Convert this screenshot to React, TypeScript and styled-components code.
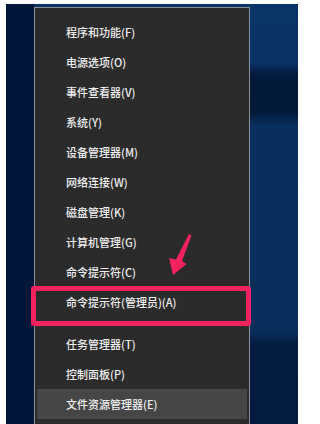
import React from 'react';
import styled, { createGlobalStyle } from 'styled-components';

const GlobalStyle = createGlobalStyle`
  html, body {
    margin: 0;
    padding: 0;
    background: #ffffff;
  }
  * {
    box-sizing: border-box;
  }
`;

const Frame = styled.div`
  width: 304px;
  height: 424px;
  padding: 4px 6px 0 6px;
  overflow: hidden;
`;

const Desktop = styled.div`
  height: 420px;
  padding: 3px 0 0 28px;
  background:
    linear-gradient(to right, #03163a 0, #03173b 28px, transparent 28px),
    linear-gradient(
      to bottom,
      #0b3468 0%,
      #0a3163 14%,
      #03193a 17%,
      #031a3b 26%,
      #0a2f5e 29%,
      #0a2d5b 78%,
      #051c40 81%,
      #041a3c 100%
    );
`;

const Menu = styled.div`
  position: relative;
  width: 216px;
  height: 420px;
  padding-top: 9px;
  background: #2b2b2b;
  border: 1px solid #8a9299;
  border-bottom: none;
  font-family: 'Noto Sans CJK SC', 'Noto Sans', sans-serif;
`;

const Item = styled.div<{ $marked?: boolean; $hover?: boolean }>`
  position: relative;
  height: 30px;
  display: flex;
  align-items: center;
  margin: 0 ${p => (p.$hover ? '2px' : '0')};
  padding-left: ${p => (p.$hover ? '29px' : '31px')};
  background: ${p => (p.$hover ? '#464646' : 'transparent')};
  color: #f0f0f0;
  font-size: 11px;
  font-weight: 500;
  line-height: 1;
  white-space: nowrap;

  ${p =>
    p.$marked &&
    `
    &::after {
      content: '';
      position: absolute;
      top: -1px;
      bottom: -9px;
      left: -4px;
      right: -2px;
      border: 5px solid #f4225e;
      border-radius: 3px;
    }
  `}
`;

const Separator = styled.div`
  height: 12px;
`;

const Arrow = styled.svg`
  position: absolute;
  left: 130px;
  top: 222px;
  width: 28px;
  height: 50px;
`;

const groups: string[][] = [
  [
    '程序和功能(F)',
    '电源选项(O)',
    '事件查看器(V)',
    '系统(Y)',
    '设备管理器(M)',
    '网络连接(W)',
    '磁盘管理(K)',
    '计算机管理(G)',
    '命令提示符(C)',
    '命令提示符(管理员)(A)',
  ],
  ['任务管理器(T)', '控制面板(P)', '文件资源管理器(E)'],
];

const App: React.FC = () => {
  return (
    <>
      <GlobalStyle />
      <Frame>
        <Desktop>
          <Menu>
            {groups.map((group, gi) => (
              <React.Fragment key={gi}>
                {gi > 0 && <Separator />}
                {group.map(label => (
                  <Item
                    key={label}
                    $marked={label === '命令提示符(管理员)(A)'}
                    $hover={label === '文件资源管理器(E)'}
                  >
                    {label}
                  </Item>
                ))}
              </React.Fragment>
            ))}
            <Arrow viewBox="0 0 28 50">
              <polygon
                points="24,4 26.5,5.5 17,31 21.5,34 8,45 4,28 11,29.5"
                fill="#f4225e"
              />
            </Arrow>
          </Menu>
        </Desktop>
      </Frame>
    </>
  );
};

export default App;
